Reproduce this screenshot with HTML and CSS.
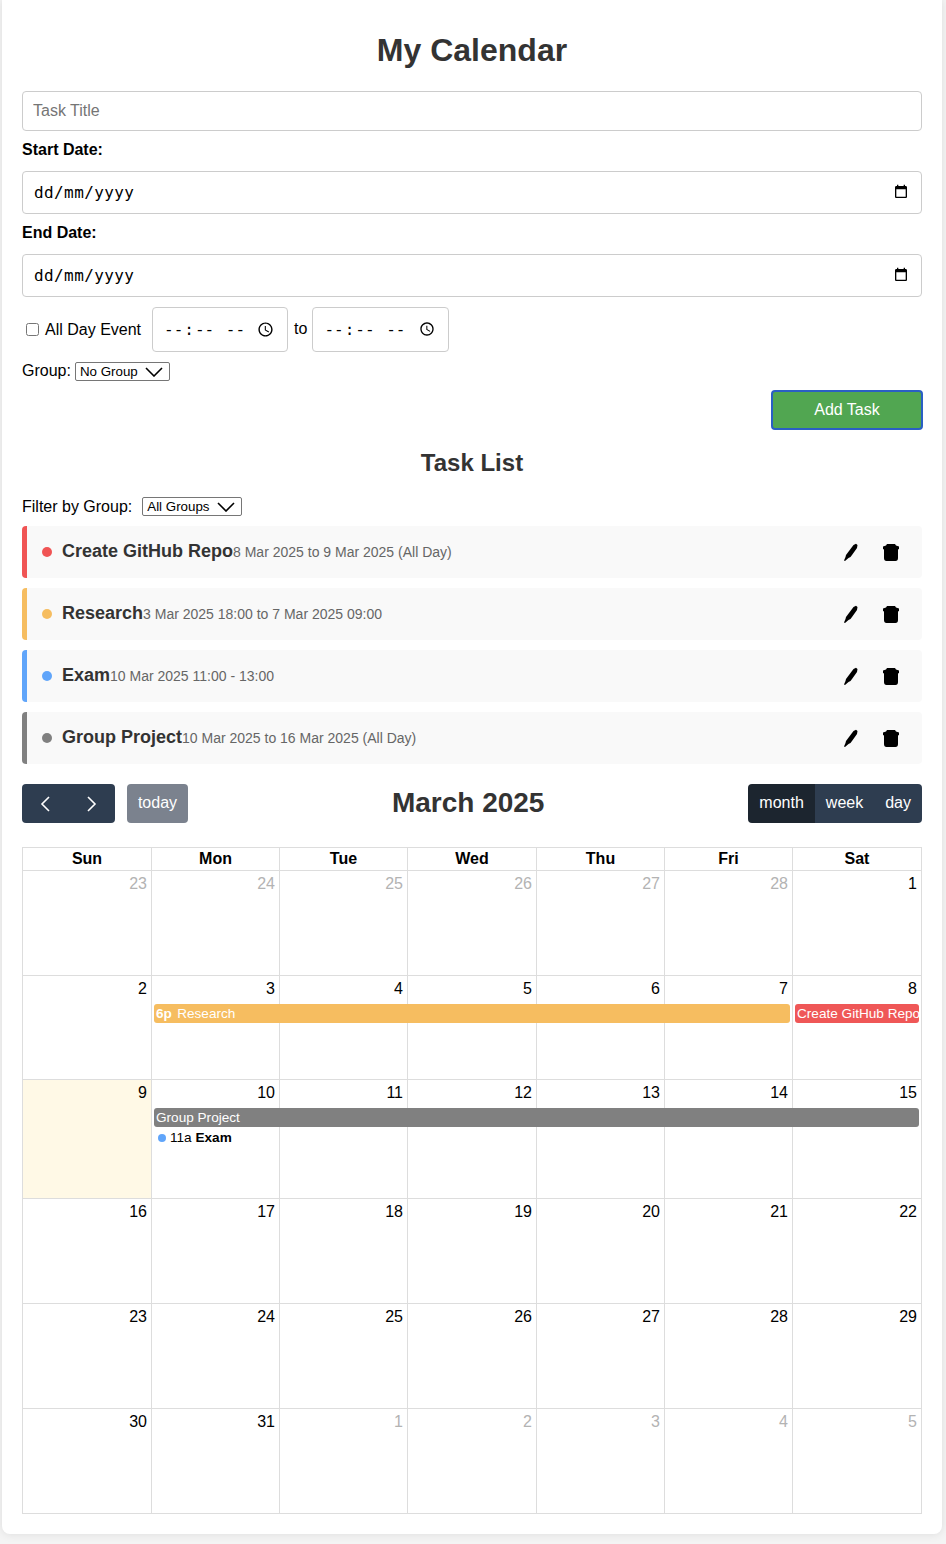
FILE: index.html
```html
<!DOCTYPE html>
<html lang="en">
<head>
<meta charset="utf-8">
<title>My Calendar</title>
<link rel="stylesheet" href="styles.css">
</head>
<body>
<main class="container">
  <h1 class="title">My Calendar</h1>
  <form class="task-form">
    <input class="field field-text" type="text" placeholder="Task Title">
    <label class="field-label">Start Date:</label>
    <div class="field field-date">
      <span class="date-text">dd/mm/yyyy</span>
      <svg class="cal-icon" viewBox="0 0 24 24"><path d="M19 3h-1V1h-2v2H8V1H6v2H5c-1.11 0-1.99.9-1.99 2L3 19c0 1.1.89 2 2 2h14c1.1 0 2-.9 2-2V5c0-1.1-.9-2-2-2zm0 16H5V8h14v11z"/></svg>
    </div>
    <label class="field-label">End Date:</label>
    <div class="field field-date">
      <span class="date-text">dd/mm/yyyy</span>
      <svg class="cal-icon" viewBox="0 0 24 24"><path d="M19 3h-1V1h-2v2H8V1H6v2H5c-1.11 0-1.99.9-1.99 2L3 19c0 1.1.89 2 2 2h14c1.1 0 2-.9 2-2V5c0-1.1-.9-2-2-2zm0 16H5V8h14v11z"/></svg>
    </div>
    <div class="time-row">
      <label class="allday"><input class="check" type="checkbox"> All Day Event</label>
      <input class="time" type="time">
      <span class="to">to</span>
      <input class="time" type="time">
    </div>
    <div class="group-row">
      <label class="group-label">Group:</label>
      <select class="select select-group"><option>No Group</option></select>
    </div>
    <div class="actions"><button class="add-btn" type="button">Add Task</button></div>
  </form>

  <h2 class="subtitle">Task List</h2>
  <div class="filter-row">
    <label>Filter by Group:</label>
    <select class="select select-filter"><option>All Groups</option></select>
  </div>

  <ul class="tasks">
    <li class="task task-red">
      <span class="dot"></span><strong class="task-name">Create GitHub Repo</strong><span class="task-date">8 Mar 2025 to 9 Mar 2025 (All Day)</span>
      <span class="task-actions">
        <svg class="icon" viewBox="0 0 16 18"><path d="M10.5 2 13 .8 14.5 2 14 5 9 12 7.5 14 5.5 15 2 18 1 17.5 2.5 14 3 12 4.5 10Z"/></svg>
        <svg class="icon" viewBox="0 0 16 18"><path d="M4 1H12L13 2.5 16 3.5V6L15 6.5V15Q15 18 12.5 18H3.5Q1 18 1 15V6.5L0 6V3.5L3 2.5Z"/></svg>
      </span>
    </li>
    <li class="task task-orange">
      <span class="dot"></span><strong class="task-name">Research</strong><span class="task-date">3 Mar 2025 18:00 to 7 Mar 2025 09:00</span>
      <span class="task-actions">
        <svg class="icon" viewBox="0 0 16 18"><path d="M10.5 2 13 .8 14.5 2 14 5 9 12 7.5 14 5.5 15 2 18 1 17.5 2.5 14 3 12 4.5 10Z"/></svg>
        <svg class="icon" viewBox="0 0 16 18"><path d="M4 1H12L13 2.5 16 3.5V6L15 6.5V15Q15 18 12.5 18H3.5Q1 18 1 15V6.5L0 6V3.5L3 2.5Z"/></svg>
      </span>
    </li>
    <li class="task task-blue">
      <span class="dot"></span><strong class="task-name">Exam</strong><span class="task-date">10 Mar 2025 11:00 - 13:00</span>
      <span class="task-actions">
        <svg class="icon" viewBox="0 0 16 18"><path d="M10.5 2 13 .8 14.5 2 14 5 9 12 7.5 14 5.5 15 2 18 1 17.5 2.5 14 3 12 4.5 10Z"/></svg>
        <svg class="icon" viewBox="0 0 16 18"><path d="M4 1H12L13 2.5 16 3.5V6L15 6.5V15Q15 18 12.5 18H3.5Q1 18 1 15V6.5L0 6V3.5L3 2.5Z"/></svg>
      </span>
    </li>
    <li class="task task-gray">
      <span class="dot"></span><strong class="task-name">Group Project</strong><span class="task-date">10 Mar 2025 to 16 Mar 2025 (All Day)</span>
      <span class="task-actions">
        <svg class="icon" viewBox="0 0 16 18"><path d="M10.5 2 13 .8 14.5 2 14 5 9 12 7.5 14 5.5 15 2 18 1 17.5 2.5 14 3 12 4.5 10Z"/></svg>
        <svg class="icon" viewBox="0 0 16 18"><path d="M4 1H12L13 2.5 16 3.5V6L15 6.5V15Q15 18 12.5 18H3.5Q1 18 1 15V6.5L0 6V3.5L3 2.5Z"/></svg>
      </span>
    </li>
  </ul>

  <section class="toolbar">
    <div class="toolbar-left">
      <div class="btn-group">
        <button class="fc-btn fc-arrow" type="button"><svg viewBox="0 0 16 16"><path d="M12 1 5 8l7 7"/></svg></button>
        <button class="fc-btn fc-arrow" type="button"><svg viewBox="0 0 16 16"><path d="M4 1l7 7-7 7"/></svg></button>
      </div>
      <button class="fc-btn fc-today" type="button">today</button>
    </div>
    <h2 class="month-title">March 2025</h2>
    <div class="btn-group">
      <button class="fc-btn fc-active" type="button">month</button>
      <button class="fc-btn" type="button">week</button>
      <button class="fc-btn" type="button">day</button>
    </div>
  </section>

  <section class="calendar">
    <div class="head">
      <div class="head-cell">Sun</div><div class="head-cell">Mon</div><div class="head-cell">Tue</div><div class="head-cell">Wed</div><div class="head-cell">Thu</div><div class="head-cell">Fri</div><div class="head-cell">Sat</div>
    </div>
    <div class="week">
      <div class="day muted">23</div><div class="day muted">24</div><div class="day muted">25</div><div class="day muted">26</div><div class="day muted">27</div><div class="day muted">28</div><div class="day">1</div>
    </div>
    <div class="week week-short">
      <div class="day">2</div><div class="day">3</div><div class="day">4</div><div class="day">5</div><div class="day">6</div><div class="day">7</div><div class="day">8</div>
      <div class="event ev-research"><b class="ev-time">6p</b> Research</div>
      <div class="event ev-github">Create GitHub Repo</div>
    </div>
    <div class="week week-tall">
      <div class="day today">9</div><div class="day">10</div><div class="day">11</div><div class="day">12</div><div class="day">13</div><div class="day">14</div><div class="day">15</div>
      <div class="event ev-project">Group Project</div>
      <div class="ev-exam"><span class="ev-dot"></span>11a <b>Exam</b></div>
    </div>
    <div class="week">
      <div class="day">16</div><div class="day">17</div><div class="day">18</div><div class="day">19</div><div class="day">20</div><div class="day">21</div><div class="day">22</div>
    </div>
    <div class="week">
      <div class="day">23</div><div class="day">24</div><div class="day">25</div><div class="day">26</div><div class="day">27</div><div class="day">28</div><div class="day">29</div>
    </div>
    <div class="week">
      <div class="day">30</div><div class="day">31</div><div class="day muted">1</div><div class="day muted">2</div><div class="day muted">3</div><div class="day muted">4</div><div class="day muted">5</div>
    </div>
  </section>
</main>
</body>
</html>
```
FILE: styles.css
```css
* { box-sizing: border-box; }
html, body { margin: 0; padding: 0; }
body {
  background: #f4f4f4;
  font-family: "Liberation Sans", Arial, sans-serif;
  font-size: 16px;
  color: #000;
  padding: 0 4px 10px 2px;
}
.container {
  width: 940px;
  background: #fff;
  padding: 32px 20px 20px;
  border-radius: 0 0 8px 8px;
  box-shadow: 0 0 10px rgba(0,0,0,.1);
}
.title {
  margin: 0 0 22px;
  font-size: 32px;
  line-height: 37px;
  font-weight: 700;
  text-align: center;
  color: #333;
}
.task-form { display: flex; flex-direction: column; }
.field {
  display: block;
  width: 100%;
  border: 1px solid #ccc;
  border-radius: 4px;
  background: #fff;
  margin: 0;
}
.field-text {
  height: 40px;
  padding: 0 10px;
  font: 16px "Liberation Sans", Arial, sans-serif;
}
.field-text::placeholder { color: #757575; }
.field-date {
  display: flex;
  align-items: center;
  justify-content: space-between;
  height: 43px;
  padding: 0 12px 0 11px;
  font: 16px "DejaVu Sans Mono", monospace;
  letter-spacing: .4px;
  color: #000;
}
.date-text { line-height: 19px; }
.cal-icon { width: 16px; height: 16px; margin-bottom: 2px; display: block; }
.field-label {
  display: block;
  font-weight: 700;
  line-height: 18px;
  margin: 10px 0 12px;
}
.time-row {
  display: flex;
  align-items: center;
  height: 45px;
  margin-top: 10px;
}
.allday { display: flex; align-items: center; margin-left: 4px; }
.check { width: 13px; height: 13px; margin: 0 6px 0 0; }
.time {
  width: 136px;
  height: 45px;
  margin-left: 11px;
  padding: 0 10px;
  border: 1px solid #ccc;
  border-radius: 4px;
  background: #fff;
  font: 16px "DejaVu Sans Mono", monospace;
  color: #000;
}
.time:last-child { width: 137px; margin-left: 5px; }
.to { margin-left: 6px; padding-bottom: 2px; }
.group-row {
  display: flex;
  align-items: center;
  gap: 4px;
  margin-top: 10px;
  height: 19px;
}
.group-label { padding-bottom: 2px; }
.select {
  appearance: none;
  height: 19px;
  border: 1px solid #767676;
  border-radius: 2px;
  background-color: #fff;
  background-image: url("data:image/svg+xml,%3Csvg xmlns='http://www.w3.org/2000/svg' viewBox='0 0 18 10'%3E%3Cpath d='M1 1l8 8 8-8' fill='none' stroke='%23000' stroke-width='1.6'/%3E%3C/svg%3E");
  background-repeat: no-repeat;
  background-size: 18px 10px;
  background-position: right 6px center;
  font: 13.33px "Liberation Sans", Arial, sans-serif;
  color: #000;
  padding: 0 0 0 4px;
  margin: 0;
}
.select-group { width: 95px; }
.select-filter { width: 100px; }
.actions { display: flex; justify-content: flex-end; margin: 9px -1px 0 0; }
.add-btn {
  width: 152px;
  height: 40px;
  background: #51a651;
  color: #fff;
  border: 2px solid #2a5fc4;
  border-radius: 4px;
  font: 16px "Liberation Sans", Arial, sans-serif;
  padding: 0;
}
.subtitle {
  margin: 19px 0 20px;
  font-size: 24px;
  line-height: 28px;
  font-weight: 700;
  text-align: center;
  color: #333;
}
.filter-row {
  display: flex;
  align-items: center;
  gap: 10px;
  height: 19px;
}
.tasks {
  list-style: none;
  margin: 10px 0 20px;
  padding: 0;
  display: flex;
  flex-direction: column;
  gap: 10px;
}
.task {
  display: flex;
  align-items: center;
  height: 52px;
  padding-left: 15px;
  background: #f9f9f9;
  border-left: 5px solid #999;
  border-radius: 4px;
}
.task-red { border-left-color: #f05454; }
.task-orange { border-left-color: #f6bd60; }
.task-blue { border-left-color: #60a5fa; }
.task-gray { border-left-color: #808080; }
.dot {
  width: 10px;
  height: 10px;
  border-radius: 50%;
  margin-right: 10px;
  flex: none;
}
.task-red .dot { background: #f05454; }
.task-orange .dot { background: #f6bd60; }
.task-blue .dot { background: #60a5fa; }
.task-gray .dot { background: #808080; }
.task-name { font-size: 18px; color: #333; padding-bottom: 2px; }
.task-date { font-size: 14px; color: #666; }
.task-actions {
  margin-left: auto;
  display: flex;
  gap: 24px;
  padding-right: 23px;
}
.icon { width: 16px; height: 18px; fill: #000; display: block; }
.toolbar {
  display: flex;
  align-items: center;
  justify-content: space-between;
  height: 39px;
  margin-bottom: 24px;
}
.toolbar-left { display: flex; gap: 12px; }
.btn-group { display: flex; }
.fc-btn {
  height: 39px;
  padding: 0 11px 2px;
  border: 0;
  background: #2e3d50;
  color: #fff;
  font: 16px "Liberation Sans", Arial, sans-serif;
  border-radius: 0;
}
.btn-group .fc-btn:first-child { border-radius: 4px 0 0 4px; }
.btn-group .fc-btn:last-child { border-radius: 0 4px 4px 0; }
.fc-arrow { width: 46.5px; padding: 0; display: flex; align-items: center; justify-content: center; }
.fc-arrow svg { width: 16px; height: 16px; fill: none; stroke: #fff; stroke-width: 1.6; }
.fc-today { background: #7b828e; border-radius: 4px; width: 61px; padding: 0 0 2px; }
.fc-active { background: #1c252f; }
.month-title {
  margin: 0 0 2px;
  font-size: 28px;
  line-height: 32px;
  font-weight: 700;
  color: #333;
}
.calendar {
  width: 900px;
  border-right: 1px solid #ddd;
  border-bottom: 1px solid #ddd;
}
.head, .week {
  display: grid;
  grid-template-columns: 129px 128px 128px 129px 128px 128px 129px;
}
.head-cell {
  height: 23px;
  line-height: 21px;
  text-align: center;
  font-weight: 700;
  border-left: 1px solid #ddd;
  border-top: 1px solid #ddd;
}
.week {
  height: 105px;
  grid-template-rows: 29px 19px 2px auto 1fr;
}
.week-short { height: 104px; }
.week-tall { height: 119px; }
.day {
  grid-row: 1 / -1;
  border-left: 1px solid #ddd;
  border-top: 1px solid #ddd;
  text-align: right;
  padding: 4px 4px 0 0;
  line-height: 18px;
}
.day:nth-child(1) { grid-column: 1; }
.day:nth-child(2) { grid-column: 2; }
.day:nth-child(3) { grid-column: 3; }
.day:nth-child(4) { grid-column: 4; }
.day:nth-child(5) { grid-column: 5; }
.day:nth-child(6) { grid-column: 6; }
.day:nth-child(7) { grid-column: 7; }
.muted { color: #b3b3b3; }
.today { background: #fff9e6; }
.event {
  grid-row: 2;
  height: 19px;
  margin: 0 2px 0 3px;
  padding: 0 2px;
  border-radius: 3px;
  color: #fff;
  font-size: 13.6px;
  line-height: 20px;
  white-space: nowrap;
  overflow: hidden;
}
.ev-research { grid-column: 2 / 7; background: #f6bd60; }
.ev-time { margin-right: 1.5px; }
.ev-github { grid-column: 7; background: #ef5757; }
.ev-project { grid-column: 2 / 8; background: #808080; }
.ev-exam {
  grid-row: 4;
  grid-column: 2;
  display: flex;
  align-items: center;
  margin-left: 7px;
  font-size: 13.6px;
  line-height: 18px;
  white-space: pre;
}
.ev-dot {
  width: 8px;
  height: 8px;
  border-radius: 50%;
  background: #60a5fa;
  margin-right: 4px;
}
```
